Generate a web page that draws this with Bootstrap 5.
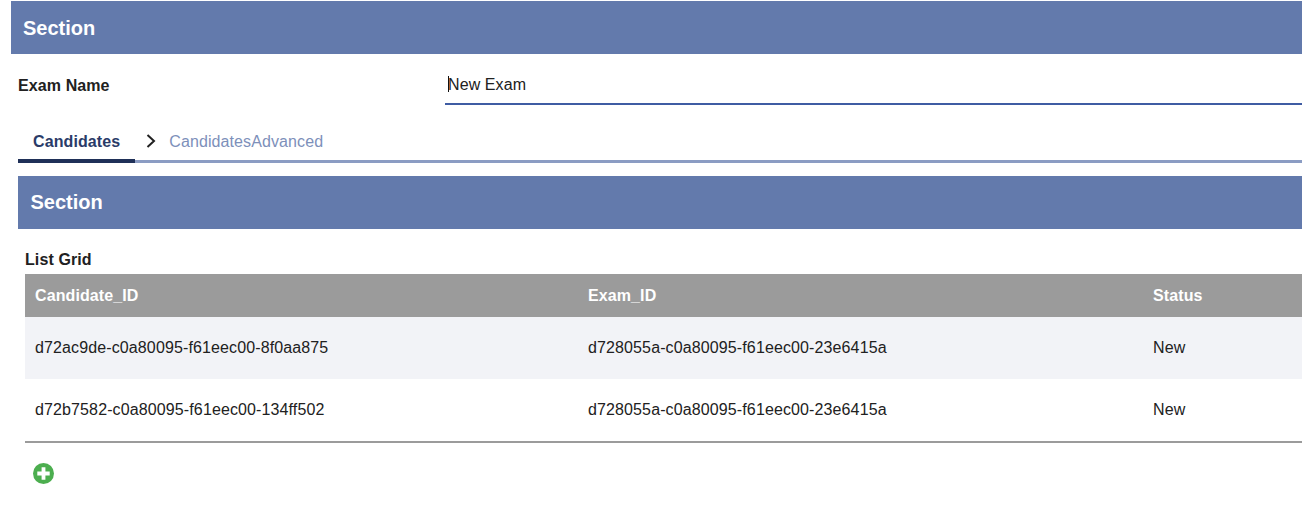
<!DOCTYPE html>
<html>
<head>
<meta charset="utf-8">
<meta name="viewport" content="width=device-width, initial-scale=1">
<link href="https://cdn.jsdelivr.net/npm/bootstrap@5.3.2/dist/css/bootstrap.min.css" rel="stylesheet">
<script src="https://cdn.jsdelivr.net/npm/bootstrap@5.3.2/dist/js/bootstrap.bundle.min.js"></script>
<style>
 body{font-family:"Liberation Sans",Arial,sans-serif;font-size:16px;letter-spacing:.1px;color:#212121;background:#fff;overflow:hidden}
 .page-wrap{padding:1px 0 0 11px}
 .sec-head{background:#637aac;color:#fff;font-weight:700;font-size:20px;letter-spacing:0;height:53px;line-height:53px;padding-left:12px}
 .top-sec{padding-top:1px}
 .inner-wrap{padding-left:7px}
 .exam-row{height:50px;margin-top:6px}
 .exam-label{width:427px;font-weight:700;font-size:16px;padding-top:1px}
 .input-box{flex:1;align-self:flex-start}
 .exam-input{display:block;width:100%;height:45px;border:0;border-bottom:2px solid #3f5ca3;border-radius:0;padding:7px 0 0 3px;font-size:16px;letter-spacing:.1px;color:#212121;outline:0;background:#fff;box-shadow:none}
 .fake-caret{position:absolute;left:3px;top:16px;width:1px;height:16px;background:#111}
 .step-row{height:38px;margin-top:15px;border-bottom:3px solid #8b9cc3}
 .step-item{font-size:16px;line-height:24px;padding:5px 15px 0;height:38px}
 .step-on{font-weight:700;color:#2a3b68;border-bottom:4px solid #1f3058}
 .step-off{color:#7d90ba;padding-left:12px}
 .step-arrow{margin-left:11px;margin-top:9px}
 .inner-sec{margin-top:13px;padding-left:12.5px}
 .grid-wrap{padding-left:7px}
 .grid-title{font-weight:700;font-size:16px;line-height:22px;margin-top:20px;height:25px}
 .cand-table{table-layout:fixed;width:100%;border-collapse:separate;border-spacing:0;margin:0;border-bottom:2px solid #9b9b9b}
 .cand-table th{background:#9b9b9b;color:#fff;font-weight:700;height:43px;padding:0 10px;border:0;font-size:16px}
 .cand-table td{height:62px;padding:0 10px;border:0;font-size:16px;letter-spacing:.12px;color:#212121;vertical-align:middle}
 .cand-table tr.alt td{background:#f2f3f7}
 .add-btn{margin:20px 0 0 8px;display:block}
</style>
</head>
<body>
<div class="page-wrap">
  <div class="sec-head top-sec">Section</div>
  <div class="inner-wrap">
    <div class="exam-row d-flex align-items-center">
      <label class="exam-label" for="examName">Exam Name</label>
      <div class="input-box position-relative">
        <input class="exam-input" id="examName" type="text" value="New Exam">
        <span class="fake-caret"></span>
      </div>
    </div>
    <div class="step-row d-flex">
      <div class="step-item step-on">Candidates</div>
      <svg class="step-arrow" width="11" height="16" viewBox="0 0 11 16"><path d="M1.500 1 L8 7 L1.500 13" fill="none" stroke="#212121" stroke-width="2"/></svg>
      <div class="step-item step-off">CandidatesAdvanced</div>
    </div>
    <div class="sec-head inner-sec">Section</div>
    <div class="grid-wrap">
      <div class="grid-title">List Grid</div>
      <table class="cand-table">
        <colgroup><col style="width:553px"><col style="width:565px"><col></colgroup>
        <thead><tr><th>Candidate_ID</th><th>Exam_ID</th><th>Status</th></tr></thead>
        <tbody>
          <tr class="alt"><td>d72ac9de-c0a80095-f61eec00-8f0aa875</td><td>d728055a-c0a80095-f61eec00-23e6415a</td><td>New</td></tr>
          <tr><td>d72b7582-c0a80095-f61eec00-134ff502</td><td>d728055a-c0a80095-f61eec00-23e6415a</td><td>New</td></tr>
        </tbody>
      </table>
      <svg class="add-btn" width="21" height="21" viewBox="0 0 22 22"><circle cx="11" cy="11" r="11" fill="#4cae4f"/><path d="M9 4.500h4V9h4.500v4H13v4.500H9V13H4.500V9H9z" fill="#fff"/></svg>
    </div>
  </div>
</div>
</body>
</html>
